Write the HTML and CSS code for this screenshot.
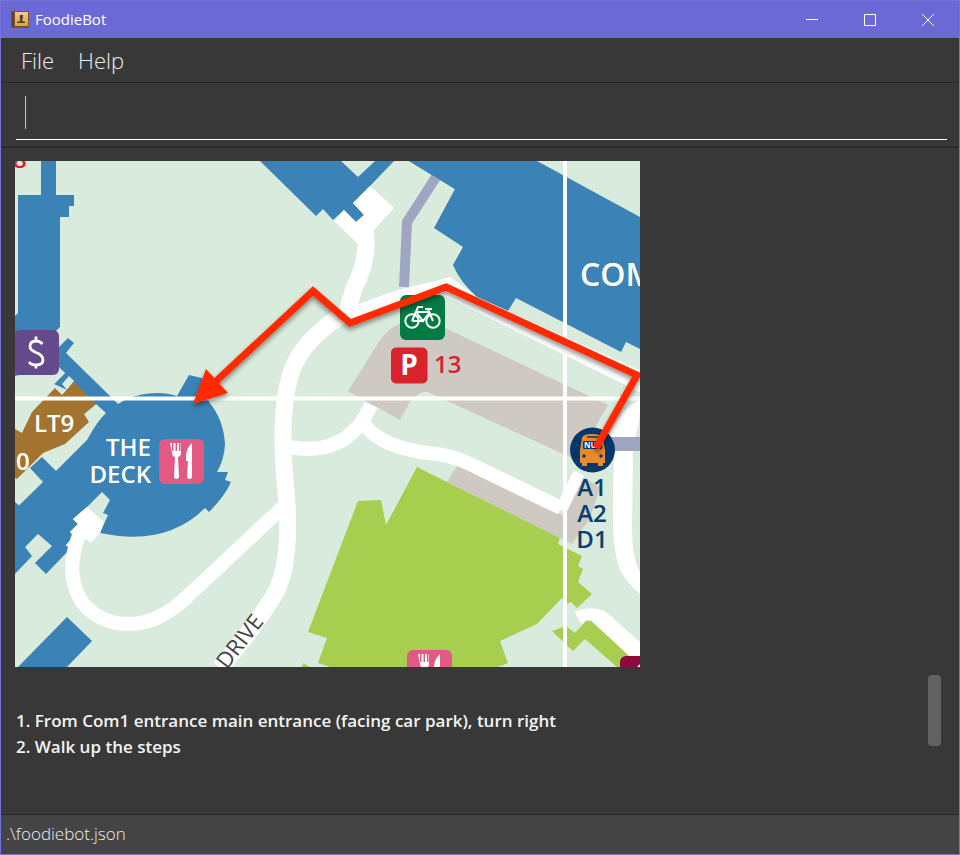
FILE: index.html
```html
<!DOCTYPE html>
<html lang="en">
<head>
<meta charset="utf-8">
<title>FoodieBot</title>
<link rel="stylesheet" href="styles.css">
</head>
<body>
<div class="window">
  <header class="titlebar">
    <svg class="app-icon" viewBox="0 0 18 18" aria-hidden="true">
      <defs><linearGradient id="cover" x1="0" y1="0" x2="0" y2="1"><stop offset="0" stop-color="#efca88"/><stop offset="1" stop-color="#d9a243"/></linearGradient></defs>
      <rect x="0" y="0" width="18" height="17" rx="1" fill="#7a5227"/>
      <rect x="1" y="1" width="2" height="15" fill="#56453a"/>
      <rect x="4" y="1" width="13" height="14" fill="url(#cover)"/>
      <path d="M9 4h3v3l-.6 1v2l2.600 .8V12H6v-1.200l3-.8V8l-.5-1z" fill="#57452f"/>
    </svg>
    <h1 class="title">FoodieBot</h1>
    <div class="controls">
      <button class="control" aria-label="Minimize"><svg viewBox="0 0 12 12"><path d="M0 5.500h12"/></svg></button>
      <button class="control" aria-label="Maximize"><svg viewBox="0 0 12 12"><path d="M.5 .5h11v11H.5z"/></svg></button>
      <button class="control" aria-label="Close"><svg viewBox="0 0 12 12"><path d="M0 0l12 12M12 0L0 12"/></svg></button>
    </div>
  </header>
  <nav class="menubar">
    <button class="menu">File</button>
    <button class="menu">Help</button>
  </nav>
  <div class="command">
    <input class="command-input" type="text" aria-label="Command">
    <span class="caret"></span>
  </div>
  <main class="result">
    <svg class="map" viewBox="15 161 625 506" role="img" aria-label="Map with the route to The Deck">
      <defs>
        <filter id="shadow" x="-10%" y="-10%" width="120%" height="130%"><feDropShadow dx="0" dy="3" stdDeviation="2.500" flood-color="#000" flood-opacity=".45"/></filter>
        <g id="cutlery" fill="#fff">
          <path d="M11 5h2v8h1.500V5h2v8H18V5h2v8h1.500V5h.5v10q0 3-3 4l1 20q-.2 2-2.500 2t-2.500-2l1-20q-3-1-3-4z"/>
          <path d="M33 5v34q-.2 2-2.500 2T28 39l1-16h-2V17q1-8 6-12z"/>
        </g>
      </defs>
      <rect x="15" y="161" width="625" height="506" fill="#d9ebdd"/>

      <!-- car parks -->
      <path class="lot" d="M348 391L377 345Q386 328 404 322L425 318L445 328L608 405L598 422L590 440L573 458L563 454L430 393Q422 388 410 402L400 420Z"/>
      <path class="lot" d="M458 464L447 482L560 538L572 544L590 518L600 488L583 477L563 515Z"/>

      <!-- buildings -->
      <path class="bldg" d="M41 161H56V195H74V206H69V217H60V327L56 331V360L59 347L68 338L74 343L66 353L110 396L118 404L125 400Q140 393 157 393Q168 393 177 396L189 375L202 378L209 402Q224 420 225 445Q224 460 217 472H228L225 480L231 482Q225 496 209 512L205 508Q166 547 100 533L108 515L103 513L110 500L102 492L87 507L73 519L78 524L70 532L74 536L66 545L70 549L46 574L35 563L52 546L38 534L25 547L32 556L15 574V502L19 505.500L43 482L30 468L42 457L60 400L74 393L54 384L65 373L59 367L15 376V316L18 313V195H41Z"/>
      <path class="ground" d="M15 376L58 375V367L65 373L54 384L63 394L55 388L32 412L22 433L15 429Z"/>
      <path class="ground" d="M62 384L69 376L74 381L67 390Z"/>
      <path class="ground" d="M96 404L106 413Q98 420 87 440L56 471L40 455L65 436L84 414Z"/>
      <path class="lecture" d="M74 382L96 404L84 414L89 422L65 444L43 453L17 479L15 478V429L22 433L32 412L55 388L62 395Z"/>
      <path class="bldg" d="M260 161L316 216L323 209L333 220L344 210L356 222L364 215L353 203L370 186L394 161H375L358 177L341 161Z"/>
      <path class="bldg" d="M409 161L455 189L434 228L463 247L453 265Q460 282 477 297L508 311L516 298L621 352L626 342L640 349V217L537 161Z"/>
      <path class="bldg" d="M67 617L92 641L67 667H18Z"/>

      <!-- sports fields -->
      <path class="field" d="M417 467L447 482L560 538L558 544L582 556L578 566L583 569L578 582L592 594L577 608L571 602L567 604L562 598L537 624L500 641L508 663L498 667H330L318 663L327 638L308 632L358 501L381 500L386 525Z"/>
      <path class="field" d="M303 663L310 667H302Z"/>

      <!-- roads -->
      <path class="white" d="M370 186L394 208L374 230L374 243H357L334 221L344 210L356 222L364 215L353 203Z"/>
      <path class="road r17" d="M366 239Q367 264 354 288L347 312Q302 339 291 373Q278 415 286 490Q292 560 276 592Q256 626 220 668"/>
      <path class="road r12" d="M346 318Q380 298 447 285"/>
      <path class="white" d="M438 280L450 277L462 286L477 297L508 311L640 370V392L440 294Z"/>
      <path class="road r14" d="M284 506L190 594Q160 624 129 624Q99 624 82 602Q64 574 79 535"/>
      <path class="white" d="M87 507L104 522L100 533L91 543L84 538L70 549L66 545L74 536L70 532L78 524L73 519Z"/>
      <path class="road r14" d="M289 447Q348 458 371 405"/>
      <path class="road r14" d="M363 422Q377 446 427 453Q450 454 472 465L561 508"/>
      <path class="road r12" d="M561 510L579 473"/>
      <path class="white" d="M640 400Q624 407 613 427L605 445H614L613 500Q612 550 620 570Q628 584 640 594V572Q633 562 632 530L633 451L640 415Z"/>
      <path class="white" d="M574 612Q600 601 617 622L640 642V663L628 655L591 620H586L582 624Z"/>
      <path class="path" d="M438 174L407 222L404 287"/>
      <path class="bldg" d="M409 161L455 189L460 161Z"/>
      <path class="path wide" d="M610 444H640"/>
      <path class="field" d="M552 631L566 626L575 633L586 621H591L628 655L634 667H617L585 639L573 651Z"/>

      <!-- grid -->
      <path class="grid" d="M565 161V667M15 398.500H640"/>

      <!-- labels -->
      <text class="label" x="34" y="432" font-size="24">LT9</text>
      <text class="label" x="16" y="470" font-size="24">0</text>
      <text class="label" x="151" y="456" font-size="24" text-anchor="end">THE</text>
      <text class="label" x="151" y="483" font-size="24" text-anchor="end">DECK</text>
      <text class="label" x="580" y="286" font-size="32">COM</text>
      <text class="label red" x="434" y="373" font-size="24">13</text>
      <text class="label red" x="13" y="168" font-size="24">8</text>
      <text class="label navy" x="592" y="496" font-size="24" text-anchor="middle">A1</text>
      <text class="label navy" x="592" y="522" font-size="24" text-anchor="middle">A2</text>
      <text class="label navy" x="592" y="548" font-size="24" text-anchor="middle">D1</text>
      <text class="street" transform="translate(227 670) rotate(-52)" font-size="22">DRIVE</text>

      <!-- badges -->
      <rect x="14" y="330" width="45" height="45" rx="6" fill="#64498b"/>
      <path d="M42.500 344Q40 341 36 341Q30 341 30 346.500Q30 350 36 352.500Q43 355 43 360Q43 365 36 365Q31 365 29 362M36 336.500V341M36 365V368.500" fill="none" stroke="#fff" stroke-width="2.800"/>
      <rect x="159" y="439" width="45" height="45" rx="6" fill="#e25a84"/>
      <use href="#cutlery" x="159" y="438"/>
      <rect x="407" y="650" width="45" height="45" rx="6" fill="#e25a84"/>
      <use href="#cutlery" x="407" y="649"/>
      <rect x="620" y="656" width="45" height="45" rx="6" fill="#8c0a3e"/>
      <path d="M637 667L640 664V667Z" fill="#fff"/>
      <rect x="400" y="295" width="45" height="45" rx="6" fill="#007b43"/>
      <g fill="none" stroke="#fff" stroke-width="2">
        <circle cx="412" cy="321" r="6.700"/><circle cx="433" cy="321" r="6.700"/>
        <path d="M412 321L418 307H423M416 312H430M433 321L428 309M425 309H432M416 312L423 321L430 312M412 321H423"/>
      </g>
      <rect x="391" y="347.500" width="36.500" height="36" rx="5" fill="#d9222c"/>
      <text class="label strong" x="409" y="375" font-size="28" text-anchor="middle">P</text>
      <circle cx="592.500" cy="450" r="22.500" fill="#04386d"/>
      <path d="M582 438Q583 434 592 434T603 438L605 450V463H603V466H598V463H587V466H582V463H580V450Z" fill="#e98a2c"/>
      <rect x="583" y="441" width="19" height="8" rx="1" fill="#04386d"/>
      <path d="M587 437H598" stroke="#04386d" stroke-width="1.500"/>
      <circle cx="584" cy="456" r="1.800" fill="#04386d"/><circle cx="601" cy="456" r="1.800" fill="#04386d"/>
      <text class="label strong" x="584" y="448" font-size="8">NUS</text>

      <!-- route -->
      <g filter="url(#shadow)">
        <path class="route" d="M596 448L637 375L446 287L350 323L313 291L214 383"/>
        <path d="M193 404L206 369L228 393Z" fill="#ff2a00"/>
      </g>
    </svg>
    <div class="details">
      <div class="steps">
        <p>1. From Com1 entrance main entrance (facing car park), turn right</p>
        <p>2. Walk up the steps</p>
      </div>
      <div class="thumb"></div>
    </div>
  </main>
  <footer class="status">.\foodiebot.json</footer>
</div>
</body>
</html>
```
FILE: styles.css
```css
* { box-sizing: border-box; }

body {
  margin: 0;
  background: #383838;
  color: #fff;
  font-family: "Open Sans", "Noto Sans", sans-serif;
}

.window {
  display: flex;
  flex-direction: column;
  min-height: 100vh;
  border: 1px solid #7573da;
}

button {
  border: 0;
  padding: 0;
  background: none;
  color: inherit;
  font: inherit;
}

.titlebar {
  display: flex;
  align-items: center;
  height: 37px;
  padding: 0 2px 0 10px;
  background: #6b69d6;
}

.app-icon { width: 18px; height: 18px; }

.title {
  flex: 1;
  margin: 0 0 0 6px;
  padding-bottom: 2px;
  font-size: 15px;
  font-weight: 400;
  line-height: 20px;
}

.controls { display: flex; }

.control {
  display: grid;
  place-items: center;
  width: 58px;
  height: 36px;
}

.control svg {
  width: 12px;
  height: 12px;
  fill: none;
  stroke: #fff;
  stroke-width: 1;
}

.menubar {
  display: flex;
  gap: 24px;
  height: 45px;
  padding: 0 20px;
  border-bottom: 1px solid #282828;
}

.menu {
  color: #eee;
  font-size: 22px;
  font-weight: 300;
  line-height: 42px;
}

.command {
  position: relative;
  height: 65px;
  padding: 6px 12px 0 15px;
  border-bottom: 2px solid #2a2a2a;
}

.command-input {
  display: block;
  width: 100%;
  height: 51px;
  padding: 0 9px;
  border: 0;
  border-bottom: 1px solid #fff;
  outline: 0;
  background: none;
  color: #fff;
  font: 300 22px "Open Sans", sans-serif;
}

.caret {
  position: absolute;
  left: 24px;
  top: 13px;
  width: 1px;
  height: 33px;
  background: #c4c4c4;
}

.result {
  display: flex;
  flex: 1;
  flex-direction: column;
  padding: 13px 18px 0 14px;
}

.map {
  display: block;
  width: 100%;
  max-width: 625px;
}

.details {
  display: flex;
  justify-content: space-between;
}

.steps {
  padding: 41px 0 0 1px;
  color: #f4f4f4;
  font-size: 17px;
  font-weight: 600;
  line-height: 26px;
}

.steps p { margin: 0; }

.thumb {
  width: 13px;
  height: 71px;
  margin-top: 8px;
  border-radius: 4px;
  background: #626262;
}

.status {
  height: 40px;
  padding: 0 5px;
  border-top: 1px solid #282828;
  background: #444;
  color: #eee;
  font-size: 17px;
  font-weight: 300;
  line-height: 38px;
}

.bldg { fill: #3b83b6; }
.ground { fill: #d9ebdd; }
.lecture { fill: #a37430; }
.lot { fill: #cfc9c3; }
.field { fill: #a8ce4f; }
.white { fill: #fff; }
.road { fill: none; stroke: #fff; stroke-linejoin: round; }
.r17 { stroke-width: 17px; }
.r14 { stroke-width: 14px; }
.r12 { stroke-width: 12px; }
.path { fill: none; stroke: #9fa6c1; stroke-width: 10px; }
.wide { stroke-width: 14px; }
.grid { fill: none; stroke: #fff; stroke-width: 4px; }
.route { fill: none; stroke: #ff2a00; stroke-width: 7px; }

.label {
  fill: #fff;
  font-family: "Open Sans", "Noto Sans", sans-serif;
  font-weight: 600;
}

.label.strong { font-weight: 700; }
.label.red { fill: #d9222c; }
.label.navy { fill: #0b3d6f; }

.street {
  fill: #444;
  font-family: "Open Sans", "Noto Sans", sans-serif;
}
```
